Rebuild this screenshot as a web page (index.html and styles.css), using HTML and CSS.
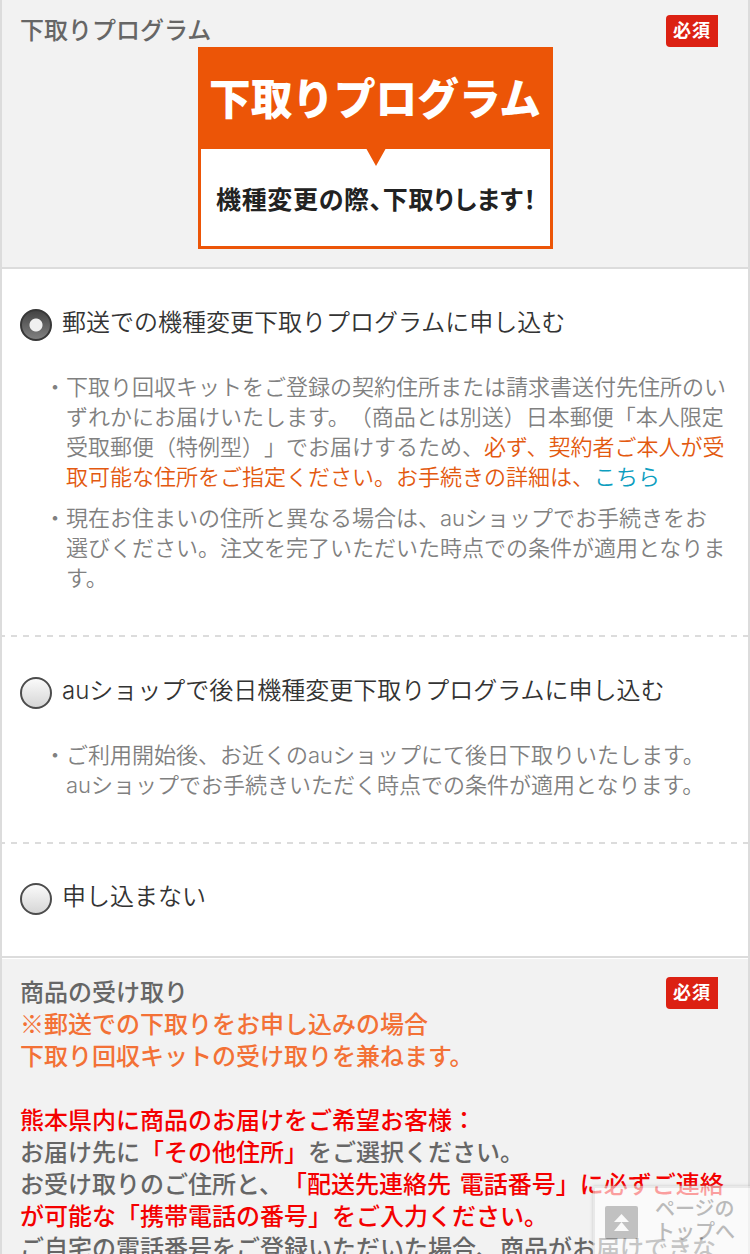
FILE: index.html
```html
<!DOCTYPE html>
<html lang="ja">
<head>
<meta charset="utf-8">
<title>下取りプログラム</title>
<link rel="stylesheet" href="styles.css">
</head>
<body>
<main class="form">
  <section class="head head-program">
    <div class="head-row">
      <h2 class="head-title">下取りプログラム</h2>
      <span class="badge">必須</span>
    </div>
    <svg class="banner" width="355" height="202" viewBox="0 0 355 202" role="img" aria-label="下取りプログラム">
      <rect width="355" height="202" fill="#ec5507"/>
      <path d="M3 102H168.500L178 119L187.500 102H352V199H3Z" fill="#fff"/>
      <text class="banner-title" x="11" y="68" textLength="332" lengthAdjust="spacingAndGlyphs">下取りプログラム</text>
      <text class="banner-sub" x="18" y="162" textLength="320" lengthAdjust="spacing">機種変更の際、下取りします！</text>
    </svg>
  </section>

  <section class="option option-mail">
    <label class="choice"><span class="radio radio-on"></span><span class="choice-text">郵送での機種変更下取りプログラムに申し込む</span></label>
    <ul class="notes">
      <li class="note">下取り回収キットをご登録の契約住所または請求書送付先住所のい<br>ずれかにお届けいたします。（商品とは別送）日本郵便「本人限定<br>受取郵便（特例型）」でお届けするため、<span class="warn">必ず、契約者ご本人が受<br>取可能な住所をご指定ください。お手続きの詳細は、</span><a class="link">こちら</a></li>
      <li class="note">現在お住まいの住所と異なる場合は、<span class="latin">au</span>ショップでお手続きをお<br>選びください。注文を完了いただいた時点での条件が適用となりま<br>す。</li>
    </ul>
  </section>

  <section class="option option-shop">
    <label class="choice"><span class="radio"></span><span class="choice-text"><span class="latin">au</span>ショップで後日機種変更下取りプログラムに申し込む</span></label>
    <ul class="notes">
      <li class="note">ご利用開始後、お近くの<span class="latin">au</span>ショップにて後日下取りいたします。<br><span class="latin">au</span>ショップでお手続きいただく時点での条件が適用となります。</li>
    </ul>
  </section>

  <section class="option option-none">
    <label class="choice"><span class="radio"></span><span class="choice-text">申し込まない</span></label>
  </section>

  <section class="head head-receive">
    <div class="head-row">
      <h2 class="head-title">商品の受け取り</h2>
      <span class="badge">必須</span>
    </div>
    <p class="lead">※郵送での下取りをお申し込みの場合<br>下取り回収キットの受け取りを兼ねます。</p>
    <p class="guide"><span class="alert">熊本県内に商品のお届けをご希望お客様：</span><br>お届け先に<span class="alert">「その他住所」</span>をご選択ください。<br>お受け取りのご住所と、<span class="alert">「配送先連絡先 電話番号」に必ずご連絡<br>が可能な「携帯電話の番号」をご入力ください。</span><br>ご自宅の電話番号をご登録いただいた場合、商品がお届けできな</p>
  </section>
</main>

<a class="to-top">
  <svg class="to-top-icon" width="33" height="33" viewBox="0 0 33 33">
    <rect width="33" height="33" rx="2" fill="#a4a4a4"/>
    <path d="M16.500 8L24 16H9ZM16.500 16L24 25H9Z" fill="#fff"/>
  </svg>
  <span class="to-top-text">ページの<br>トップへ</span>
</a>
</body>
</html>
```

FILE: styles.css
```css
* {
  box-sizing: border-box;
}

body {
  margin: 0;
  height: 1254px;
  overflow: hidden;
  background: #fff;
  font-family: "Liberation Sans", "Noto Sans CJK JP", sans-serif;
  text-spacing-trim: space-all;
  white-space: nowrap;
}

h2, p, ul {
  margin: 0;
  padding: 0;
}

.form {
  height: 1254px;
  overflow: hidden;
  border: solid #dcdcdc;
  border-width: 0 2px;
}

.head {
  display: flex;
  flex-direction: column;
  padding: 14px 30px 0 18px;
  background: #f2f2f2;
  color: #666;
  font-size: 24px;
  font-weight: 500;
  line-height: 32px;
}

.head-program {
  height: 269px;
  border-bottom: 2px solid #dcdcdc;
}

.head-receive {
  padding-top: 18px;
  border-top: 1px solid #fff;
}

.head-row {
  display: flex;
  justify-content: space-between;
  height: 33px;
}

.head-receive .head-row {
  height: 32px;
}

.head-title {
  font-size: 24px;
  font-weight: 500;
}

.head-program .head-title {
  padding-top: 1px;
}

.badge {
  width: 52px;
  height: 32px;
  margin-top: 1px;
  border-radius: 4px 0 0 4px;
  background: #dc2113;
  color: #fff;
  font-size: 18px;
  font-weight: 700;
  letter-spacing: 1px;
  line-height: 33px;
  text-align: center;
}

.head-receive .badge {
  margin-top: 0;
}

.banner {
  align-self: center;
  margin-left: 13px;
}

.banner-title {
  fill: #fff;
  font-family: "Noto Sans CJK JP", sans-serif;
  font-size: 43px;
  font-weight: 900;
}

.banner-sub {
  fill: #222;
  font-family: "Noto Sans CJK JP", sans-serif;
  font-size: 25px;
  font-weight: 700;
  font-feature-settings: "palt";
}

.option {
  padding-left: 18px;
}

.option-mail {
  height: 368px;
  padding-top: 38px;
}

.option-shop {
  height: 207px;
  padding-top: 38px;
}

.option-mail,
.option-shop {
  background: repeating-linear-gradient(90deg, #dcdcdc 0 6px, transparent 6px 12px) -3px 100% / 760px 2px no-repeat;
}

.option-none {
  height: 114px;
  padding-top: 37px;
  border-bottom: 2px solid #dcdcdc;
}

.choice {
  display: flex;
  align-items: flex-start;
  gap: 10px;
  height: 36px;
  color: #333;
  font-size: 24px;
  font-weight: 350;
  line-height: 32px;
}

.latin {
  font-family: Inter, sans-serif;
  font-weight: 300;
  line-height: 1;
}

.radio {
  width: 32px;
  height: 32px;
  margin-top: 2px;
  border: 2px solid #4c4c4c;
  border-radius: 50%;
  background: linear-gradient(#fafafa, #d6d6d6);
}

.radio-on {
  border-color: #373737;
  background: radial-gradient(circle, #f0f0f0 6px, transparent 7px), linear-gradient(#444, #808080);
}

.notes {
  padding: 30px 0 0 46px;
  list-style: none;
  color: #808080;
  font-size: 22px;
  font-weight: 350;
  line-height: 30px;
}

.note {
  margin-bottom: 11px;
}

.note::before {
  content: "・";
  display: inline-block;
  width: 22px;
  margin-left: -22px;
}

.warn {
  color: #e3590f;
}

.link {
  color: #0d9ebf;
}

.lead {
  color: #f37136;
}

.guide {
  padding-top: 32px;
  word-spacing: 2px;
}

.alert {
  color: #f40000;
}

.to-top {
  position: absolute;
  left: 593px;
  top: 1186px;
  display: flex;
  gap: 17px;
  width: 160px;
  height: 80px;
  padding: 18px 0 0 10px;
  border: 2px solid #e4e4e4;
  background: #fff;
  box-shadow: 0 0 3px #aaa;
  opacity: 0.62;
}

.to-top-text {
  color: #999;
  font-size: 20px;
  font-weight: 500;
  line-height: 23px;
  margin-top: -8px;
}
```
